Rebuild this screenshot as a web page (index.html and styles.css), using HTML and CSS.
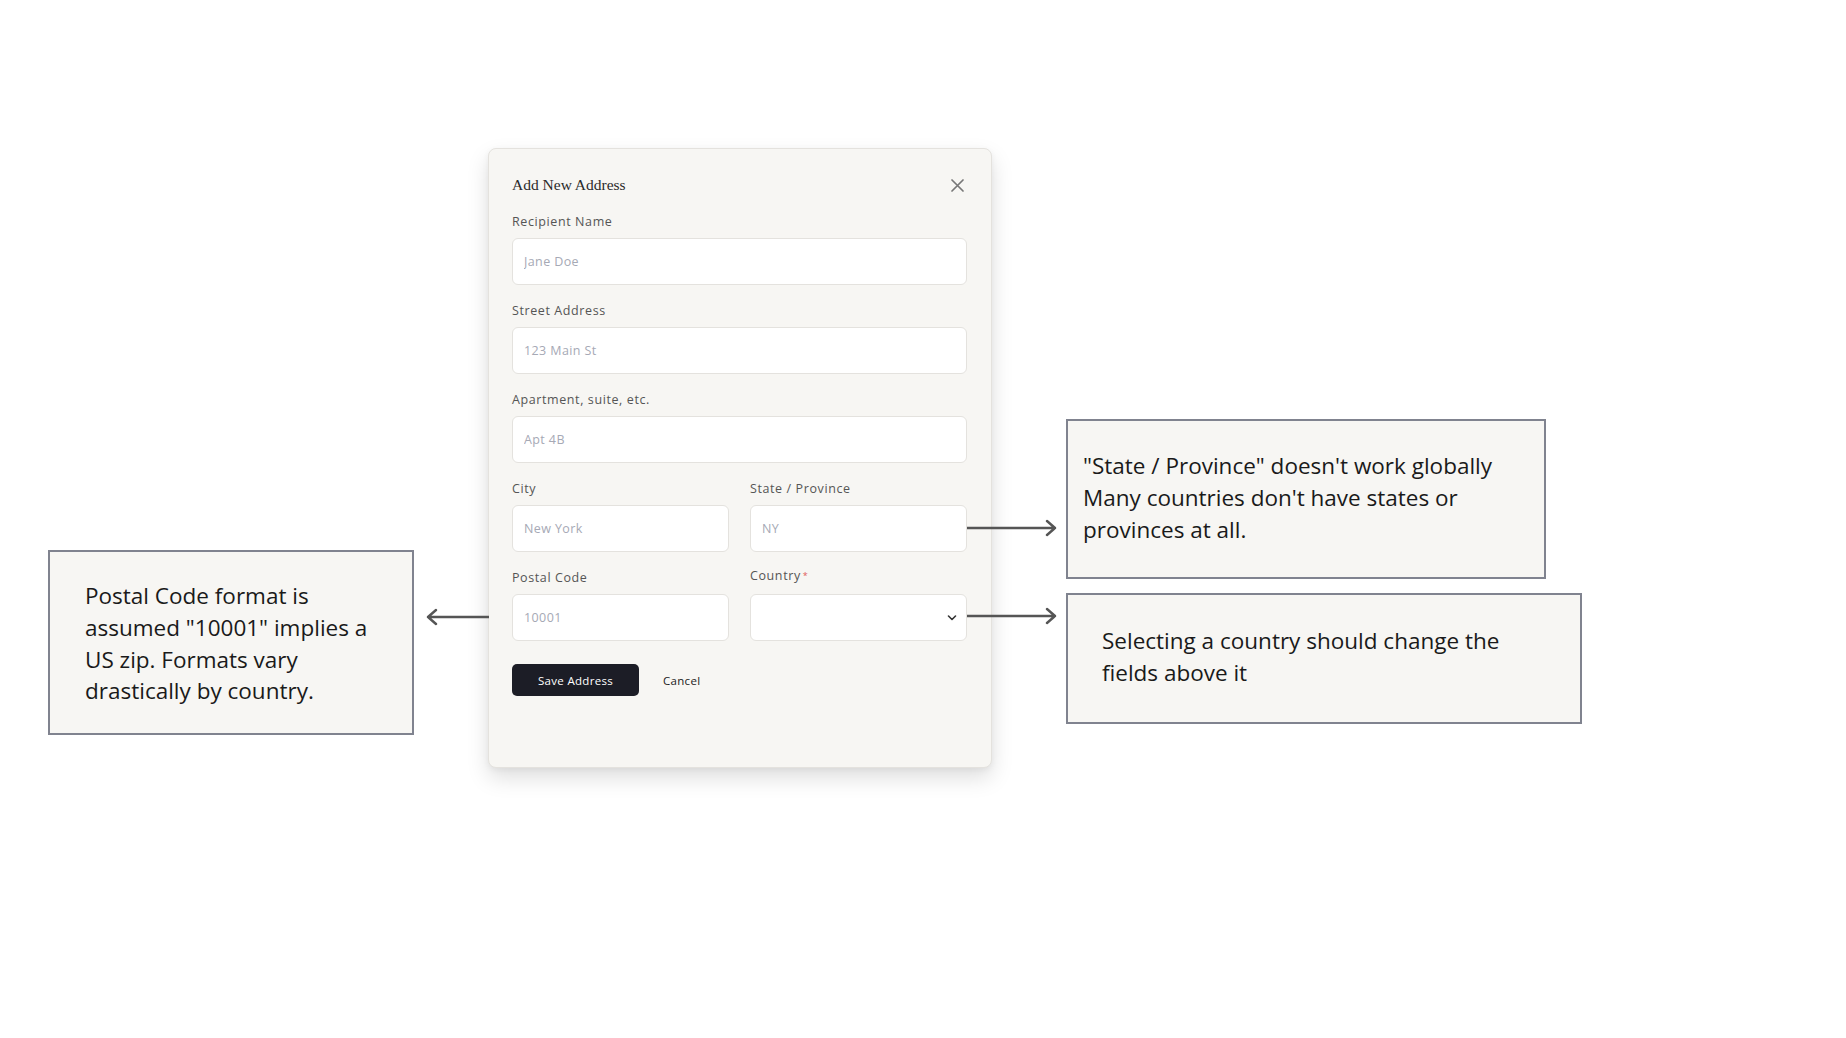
FILE: index.html
```html
<!DOCTYPE html>
<html lang="en">
<head>
    <meta charset="UTF-8">
    <meta name="viewport" content="width=device-width, initial-scale=1.0">
    <title>Add New Address – review</title>
    <link rel="stylesheet" href="styles.css">
</head>
<body>
<div class="canvas">

    <!-- Модальное окно формы -->
    <div class="modal">
        <div class="modal-header">
            <h2>Add New Address</h2>
            <button class="close" aria-label="Close">
                <svg width="13" height="13" viewBox="0 0 13 13"><path d="M1 1 L12 12 M12 1 L1 12" stroke="#777" stroke-width="1.7" stroke-linecap="round"/></svg>
            </button>
        </div>

        <div class="field">
            <label>Recipient Name</label>
            <input type="text" placeholder="Jane Doe">
        </div>
        <div class="field">
            <label>Street Address</label>
            <input type="text" placeholder="123 Main St">
        </div>
        <div class="field">
            <label>Apartment, suite, etc.</label>
            <input type="text" placeholder="Apt 4B">
        </div>
        <div class="row">
            <div class="field">
                <label>City</label>
                <input type="text" placeholder="New York">
            </div>
            <div class="field">
                <label>State / Province</label>
                <input type="text" placeholder="NY">
            </div>
        </div>
        <div class="row row-last">
            <div class="field">
                <label>Postal Code</label>
                <input type="text" placeholder="10001">
            </div>
            <div class="field">
                <label class="country-label">Country<span class="req">*</span></label>
                <div class="select">
                    <svg width="10" height="6" viewBox="0 0 10 6"><path d="M1.5 1 L5 4.5 L8.5 1" fill="none" stroke="#333" stroke-width="1.6" stroke-linecap="round" stroke-linejoin="round"/></svg>
                </div>
            </div>
        </div>

        <div class="actions">
            <button class="btn-save">Save Address</button>
            <button class="btn-cancel">Cancel</button>
        </div>
    </div>

    <!-- Заметки -->
    <div class="note note-postal">
        Postal Code format is assumed "10001" implies a US zip. Formats vary drastically by country.
    </div>
    <div class="note note-state">
        "State / Province" doesn't work globally<br>
        Many countries don't have states or provinces at all.
    </div>
    <div class="note note-country">
        Selecting a country should change the fields above it
    </div>

    <!-- Стрелки -->
    <svg class="arrow arrow-postal" width="64" height="20" viewBox="0 0 64 20">
        <path d="M3 10 H64 M11 3 L3 10 L11 17" fill="none" stroke="#555" stroke-width="2.4" stroke-linecap="round" stroke-linejoin="round"/>
    </svg>
    <svg class="arrow arrow-state" width="92" height="20" viewBox="0 0 92 20">
        <path d="M0 10 H88 M80 3 L88 10 L80 17" fill="none" stroke="#555" stroke-width="2.4" stroke-linecap="round" stroke-linejoin="round"/>
    </svg>
    <svg class="arrow arrow-country" width="92" height="20" viewBox="0 0 92 20">
        <path d="M0 10 H88 M80 3 L88 10 L80 17" fill="none" stroke="#555" stroke-width="2.4" stroke-linecap="round" stroke-linejoin="round"/>
    </svg>
</div>
</body>
</html>
```

FILE: styles.css
```css
/* Общие переменные */
:root {
    --color-page: #ffffff;
    --color-panel: #f7f6f3;
    --color-border: #e4e2de;
    --color-label: #555555;
    --color-placeholder: #a6a9b5;
    --color-dark: #1c1d26;
    --color-note-border: #80838f;
    --color-arrow: #555;
}

body {
    margin: 0;
    background: var(--color-page);
    font-family: "Open Sans", Arial, sans-serif;
}

.canvas {
    position: relative;
    width: 1846px;
    height: 1038px;
    overflow: hidden;
    padding-top: 148px;
    box-sizing: border-box;
}

/* Модальное окно */
.modal {
    width: 504px;
    height: 620px;
    margin-left: 488px;
    box-sizing: border-box;
    padding: 21px 24px 0 23px;
    background: var(--color-panel);
    border: 1px solid var(--color-border);
    border-radius: 8px;
    box-shadow: 0 10px 22px rgba(0, 0, 0, 0.13), 0 2px 6px rgba(0, 0, 0, 0.05);
}

.modal-header {
    display: flex;
    justify-content: space-between;
    align-items: center;
    height: 30px;
    margin-bottom: 14px;
}

.modal-header h2 {
    margin: 0;
    font-family: "Liberation Serif", "Times New Roman", serif;
    font-size: 15.5px;
    font-weight: normal;
    color: #2a2a2a;
    line-height: 30px;
}

.close {
    background: none;
    border: none;
    padding: 0;
    width: 13px;
    height: 13px;
    margin-right: 3px;
    cursor: pointer;
    display: flex;
}

.field {
    display: flex;
    flex-direction: column;
    margin-bottom: 18px;
}

.field label {
    font-size: 12.5px;
    font-weight: 500;
    line-height: 16px;
    color: var(--color-label);
    margin-bottom: 8px;
    letter-spacing: 0.6px;
}

.country-label {
    position: relative;
    top: -2px;
}

.req {
    color: #e05a5a;
    font-size: 9px;
    vertical-align: top;
    margin-left: 2px;
}

.field input,
.select {
    height: 47px;
    box-sizing: border-box;
    background: #ffffff;
    border: 1px solid var(--color-border);
    border-radius: 6px;
    padding: 0 11px;
    font-family: "Open Sans", Arial, sans-serif;
    font-size: 12.5px;
    letter-spacing: 0.4px;
    color: #333;
    outline: none;
}

.field input::placeholder {
    color: var(--color-placeholder);
}

.select {
    display: flex;
    align-items: center;
    justify-content: flex-end;
    padding-right: 9px;
}

.row {
    display: grid;
    grid-template-columns: 1fr 1fr;
    column-gap: 21px;
}

.row-last .field {
    margin-bottom: 0;
}

.actions {
    display: flex;
    align-items: center;
    gap: 24px;
    margin-top: 23px;
}

.btn-save {
    width: 127px;
    height: 32px;
    background: var(--color-dark);
    color: #ffffff;
    border: none;
    border-radius: 5px;
    font-family: "Open Sans", Arial, sans-serif;
    font-size: 11.5px;
    font-weight: 500;
    letter-spacing: 0.3px;
    cursor: pointer;
}

.btn-cancel {
    background: none;
    border: none;
    padding: 0;
    font-family: "Open Sans", Arial, sans-serif;
    font-size: 11.5px;
    font-weight: 500;
    letter-spacing: 0.3px;
    color: #222;
    cursor: pointer;
}

/* Заметки на холсте */
.note {
    position: absolute;
    box-sizing: border-box;
    background: var(--color-panel);
    border: 2px solid var(--color-note-border);
    font-family: "Open Sans", sans-serif;
    font-size: 22.5px;
    line-height: 31.8px;
    color: #1a1a1a;
}

.note-postal {
    left: 48px;
    top: 550px;
    width: 366px;
    height: 185px;
    padding: 28px 30px 0 35px;
}

.note-state {
    left: 1066px;
    top: 419px;
    width: 480px;
    height: 160px;
    padding: 29px 30px 0 15px;
}

.note-country {
    left: 1066px;
    top: 593px;
    width: 516px;
    height: 131px;
    padding: 30px 50px 0 34px;
}

.arrow {
    position: absolute;
}

.arrow-postal {
    left: 425px;
    top: 607px;
}

.arrow-state {
    left: 967px;
    top: 518px;
}

.arrow-country {
    left: 967px;
    top: 606px;
}
```
